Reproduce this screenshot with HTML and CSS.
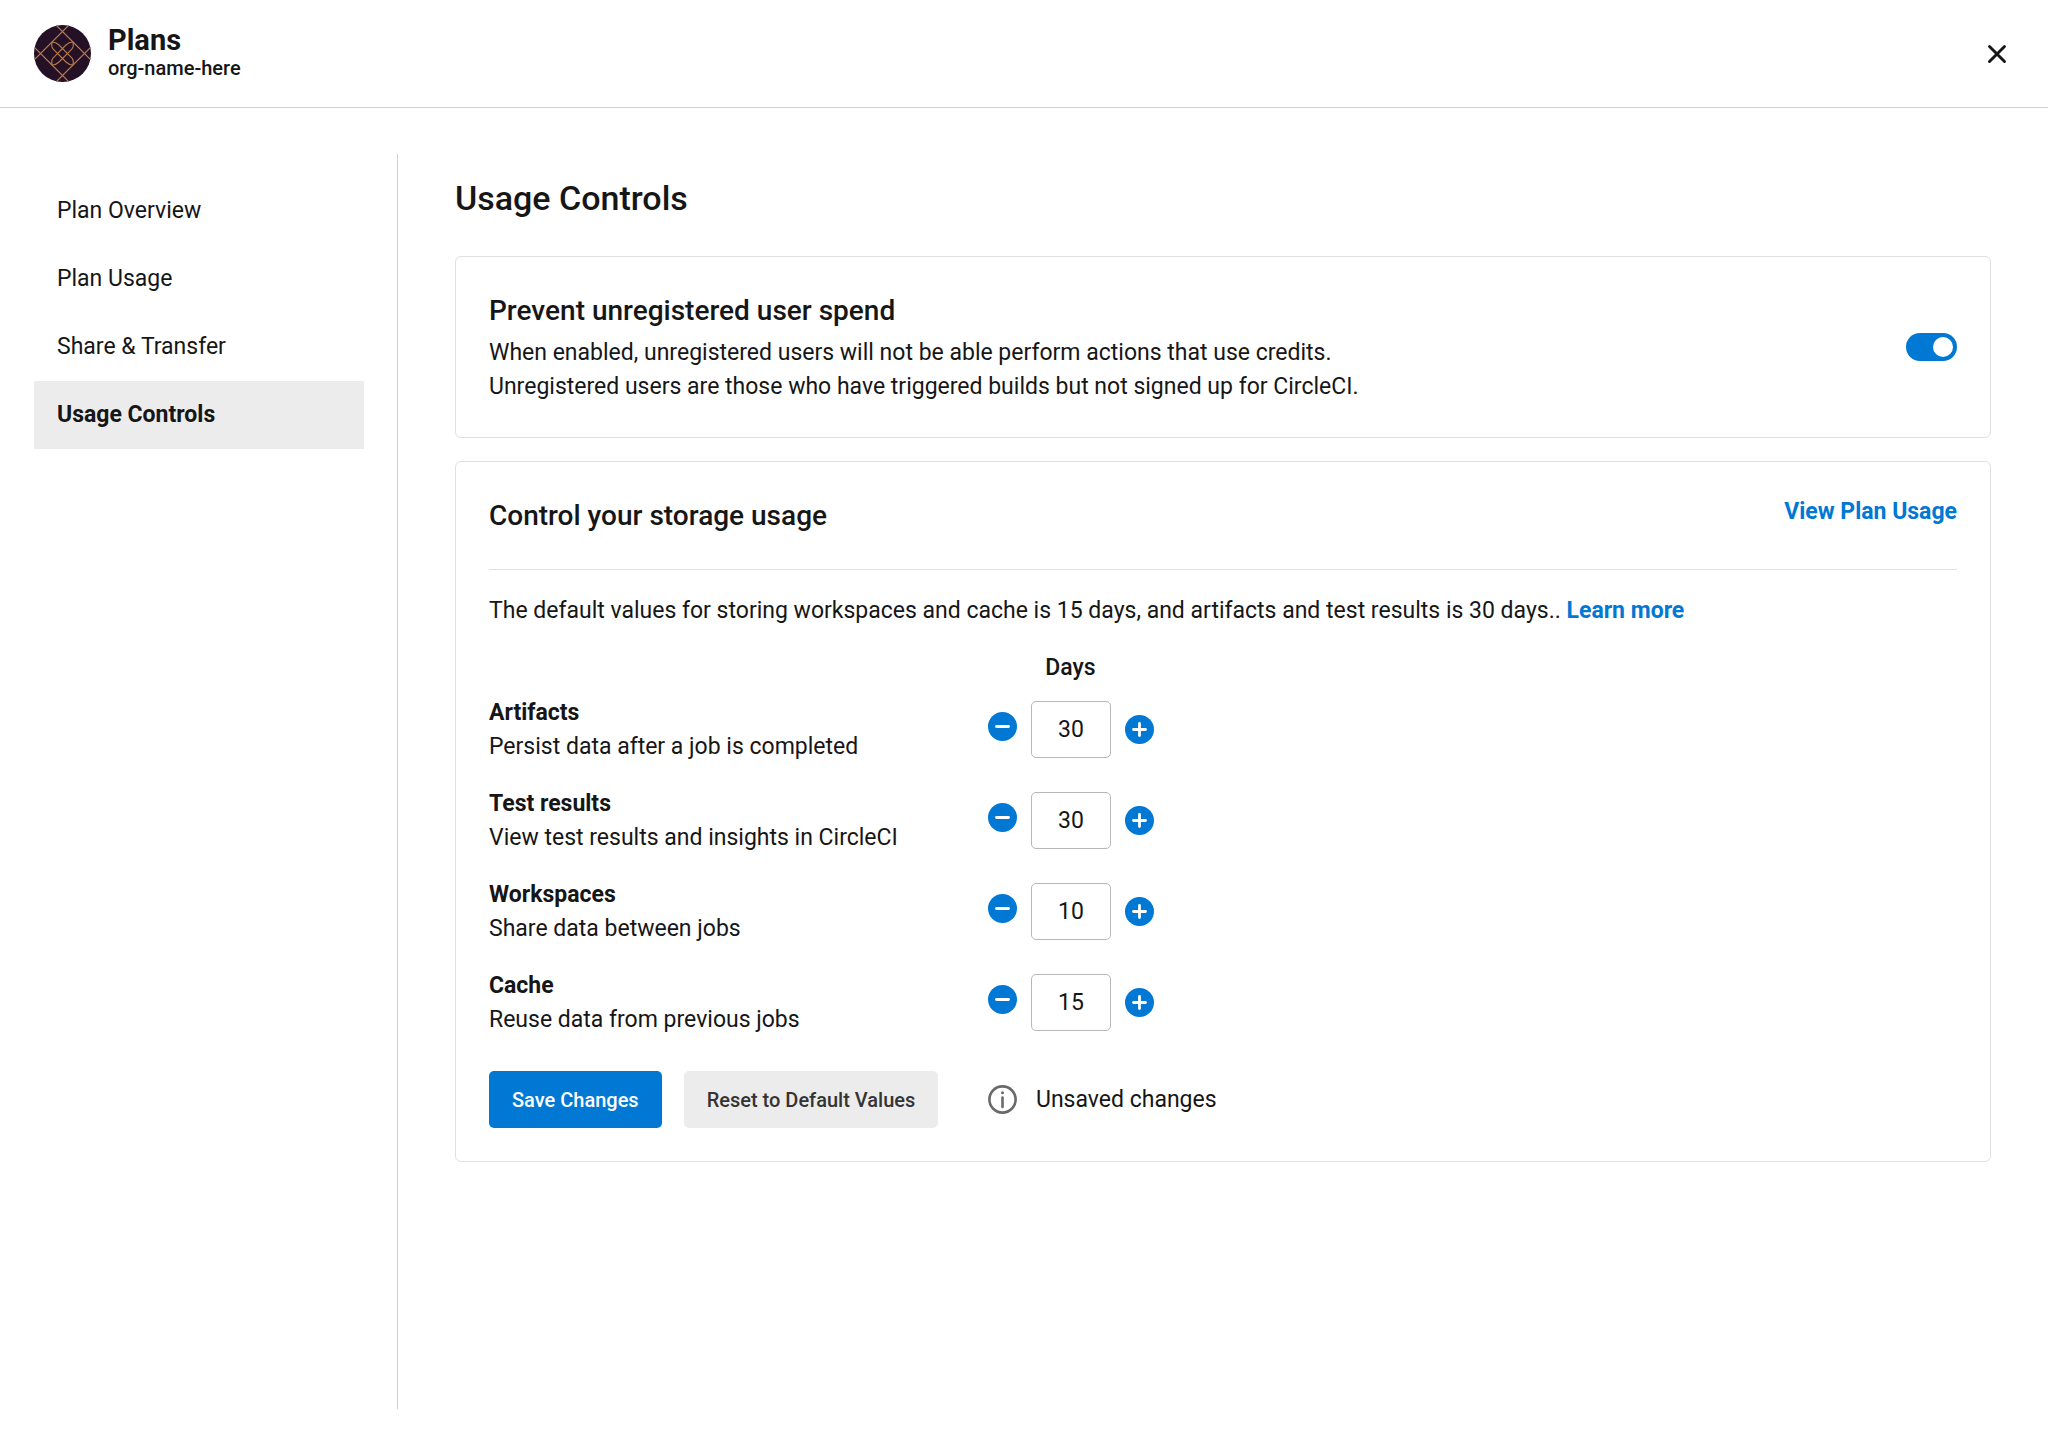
FILE: index.html
```html
<!DOCTYPE html>
<html lang="en">
<head>
<meta charset="utf-8">
<meta name="viewport" content="width=device-width, initial-scale=1">
<title>Plans</title>
<link rel="stylesheet" href="styles.css">
</head>
<body>
<svg class="sprite" aria-hidden="true">
  <symbol id="minus" viewBox="0 0 29 29">
    <circle cx="14.5" cy="14.5" r="14.5" fill="#0078d4"/>
    <path d="M8.5 14.5h12" stroke="#fff" stroke-width="2.8" stroke-linecap="round"/>
  </symbol>
  <symbol id="plus" viewBox="0 0 29 29">
    <circle cx="14.5" cy="14.5" r="14.5" fill="#0078d4"/>
    <path d="M8.5 14.5h12M14.5 8.5v12" stroke="#fff" stroke-width="2.8" stroke-linecap="round"/>
  </symbol>
</svg>

<header class="header">
  <svg class="avatar" viewBox="0 0 57 57" aria-hidden="true">
    <defs><clipPath id="disc"><circle cx="28.5" cy="28.5" r="28.5"/></clipPath></defs>
    <g clip-path="url(#disc)">
      <rect width="57" height="57" fill="#241126"/>
      <g fill="none" stroke="#b5794c" stroke-width="1.1">
        <path d="M22 0 39 17M35 0 18 17M22 57 39 40M35 57 18 40"/>
        <path d="M0 22 18 40M0 35 18 17M57 22 39 40M57 35 39 17"/>
        <path d="M18 17c3 0 5 1 7 3l13 13c1.500 2 1.500 5 1 7-3 0-5-1-7-3L19 24c-1.500-2-1.500-5-1-7z"/>
        <path d="M39 17c-3 0-5 1-7 3L19 33c-1.500 2-1.500 5-1 7 3 0 5-1 7-3l13-13c1.500-2 1.500-5 1-7z"/>
      </g>
    </g>
  </svg>
  <div class="heading">
    <h1 class="heading-title">Plans</h1>
    <p class="heading-org">org-name-here</p>
  </div>
  <button class="icon-button close" type="button" aria-label="Close">
    <svg width="20" height="20" viewBox="0 0 20 20" aria-hidden="true"><path d="M2.500 2.500l15 15M17.500 2.500l-15 15" stroke="#161616" stroke-width="2.900" stroke-linecap="round"/></svg>
  </button>
</header>

<div class="layout">
  <nav class="sidebar" aria-label="Plans">
    <a class="nav-link" href="#overview">Plan Overview</a>
    <a class="nav-link" href="#usage">Plan Usage</a>
    <a class="nav-link" href="#share">Share &amp; Transfer</a>
    <a class="nav-link active" href="#controls" aria-current="page">Usage Controls</a>
  </nav>

  <main class="content">
    <h2 class="page-title">Usage Controls</h2>

    <section class="card spend">
      <div>
        <h3 class="card-title"><label for="prevent">Prevent unregistered user spend</label></h3>
        <p class="spend-text">When enabled, unregistered users will not be able perform actions that use credits.<br>Unregistered users are those who have triggered builds but not signed up for CircleCI.</p>
      </div>
      <input class="toggle" id="prevent" type="checkbox" role="switch" checked>
    </section>

    <section class="card">
      <div class="card-head">
        <h3 class="card-title">Control your storage usage</h3>
        <a class="link" href="#usage">View Plan Usage</a>
      </div>
      <p class="intro">The default values for storing workspaces and cache is 15 days, and artifacts and test results is 30 days.. <a class="link" href="#learn">Learn more</a></p>

      <form class="retention">
        <div class="row">
          <span class="days">Days</span>
        </div>
        <div class="row">
          <label class="setting" for="artifacts"><b>Artifacts</b><span>Persist data after a job is completed</span></label>
          <div class="stepper">
            <button class="icon-button decrease" type="button" aria-label="Decrease artifacts days"><svg class="step-icon"><use href="#minus"/></svg></button>
            <input class="value" id="artifacts" type="text" inputmode="numeric" value="30">
            <button class="icon-button" type="button" aria-label="Increase artifacts days"><svg class="step-icon"><use href="#plus"/></svg></button>
          </div>
        </div>
        <div class="row">
          <label class="setting" for="results"><b>Test results</b><span>View test results and insights in CircleCI</span></label>
          <div class="stepper">
            <button class="icon-button decrease" type="button" aria-label="Decrease test results days"><svg class="step-icon"><use href="#minus"/></svg></button>
            <input class="value" id="results" type="text" inputmode="numeric" value="30">
            <button class="icon-button" type="button" aria-label="Increase test results days"><svg class="step-icon"><use href="#plus"/></svg></button>
          </div>
        </div>
        <div class="row">
          <label class="setting" for="workspaces"><b>Workspaces</b><span>Share data between jobs</span></label>
          <div class="stepper">
            <button class="icon-button decrease" type="button" aria-label="Decrease workspaces days"><svg class="step-icon"><use href="#minus"/></svg></button>
            <input class="value" id="workspaces" type="text" inputmode="numeric" value="10">
            <button class="icon-button" type="button" aria-label="Increase workspaces days"><svg class="step-icon"><use href="#plus"/></svg></button>
          </div>
        </div>
        <div class="row">
          <label class="setting" for="cache"><b>Cache</b><span>Reuse data from previous jobs</span></label>
          <div class="stepper">
            <button class="icon-button decrease" type="button" aria-label="Decrease cache days"><svg class="step-icon"><use href="#minus"/></svg></button>
            <input class="value" id="cache" type="text" inputmode="numeric" value="15">
            <button class="icon-button" type="button" aria-label="Increase cache days"><svg class="step-icon"><use href="#plus"/></svg></button>
          </div>
        </div>
        <div class="row actions">
          <div class="buttons">
            <button class="button primary" type="submit">Save Changes</button>
            <button class="button" type="reset">Reset to Default Values</button>
          </div>
          <p class="status">
            <svg width="29" height="29" viewBox="0 0 29 29" fill="none" aria-hidden="true">
              <circle cx="14.500" cy="14.500" r="13.100" stroke="#6a6a6a" stroke-width="2.600"/>
              <path d="M14.500 12.500v9.500" stroke="#6a6a6a" stroke-width="2.600" stroke-linecap="round"/>
              <circle cx="14.500" cy="7.800" r="1.500" fill="#6a6a6a"/>
            </svg>
            Unsaved changes
          </p>
        </div>
      </form>
    </section>
  </main>
</div>
</body>
</html>
```

FILE: styles.css
```css
* {
  box-sizing: border-box;
}

body {
  display: flex;
  flex-direction: column;
  min-height: 100vh;
  margin: 0;
  background: #fff;
  color: #161616;
  font: 400 23px/34px Roboto, "Liberation Sans", sans-serif;
}

h1,
h2,
h3,
p {
  margin: 0;
}

button,
input {
  font: inherit;
  color: inherit;
}

.sprite {
  display: none;
}

/* Header */

.header {
  display: flex;
  align-items: center;
  gap: 17px;
  padding: 24px 34px;
  border-bottom: 1px solid #d0d0d0;
}

.avatar {
  width: 57px;
  height: 57px;
}

.heading {
  padding-bottom: 3px;
}

.heading-title {
  font-size: 29px;
  font-weight: 700;
  line-height: 32px;
}

.heading-org {
  font-size: 20px;
  font-weight: 500;
  line-height: 24px;
}

.icon-button {
  display: flex;
  padding: 0;
  border: 0;
  background: none;
  cursor: pointer;
}

.close {
  margin-left: auto;
  padding: 7px;
}

/* Layout */

.layout {
  display: flex;
  flex: 1;
  padding: 46px 57px 47px 34px;
}

.sidebar {
  flex: none;
  width: 364px;
  padding: 23px 33px 0 0;
  border-right: 1px solid #d0d0d0;
}

.nav-link {
  display: block;
  padding: 17px 23px;
  color: inherit;
  line-height: 34px;
  text-decoration: none;
}

.nav-link.active {
  background: #ececec;
  font-weight: 700;
}

.content {
  flex: 1;
  min-width: 0;
  padding: 21px 0 0 57px;
}

.page-title {
  margin-bottom: 35px;
  font-size: 34px;
  font-weight: 500;
  line-height: 46px;
}

/* Cards */

.card {
  padding: 33px;
  border: 1px solid #e0e0e0;
  border-radius: 6px;
}

.card + .card {
  margin-top: 23px;
}

.card-title {
  font-size: 28px;
  font-weight: 500;
  line-height: 42px;
}

.spend {
  display: flex;
  align-items: center;
  justify-content: space-between;
  gap: 34px;
}

.spend-text {
  padding-top: 4px;
}

.toggle {
  flex: none;
  display: flex;
  align-items: center;
  justify-content: flex-end;
  width: 51px;
  height: 28px;
  margin: 0;
  padding: 4px;
  border-radius: 14px;
  background: #0078d4;
  appearance: none;
  cursor: pointer;
}

.toggle::before {
  content: "";
  width: 20px;
  height: 20px;
  border-radius: 50%;
  background: #fff;
}

.toggle:not(:checked) {
  justify-content: flex-start;
  background: #a0a0a0;
}

.card-head {
  display: flex;
  align-items: flex-start;
  justify-content: space-between;
  padding-bottom: 32px;
  border-bottom: 1px solid #e0e0e0;
}

.link {
  color: #0078d4;
  font-weight: 700;
  text-decoration: none;
}

.intro {
  padding: 24px 0 23px;
}

/* Retention form */

.row {
  display: grid;
  grid-template-columns: 499px 1fr;
  margin-bottom: 21px;
}

.row:first-child {
  margin-bottom: 9px;
}

.days {
  grid-column: 2;
  width: 165px;
  font-weight: 500;
  text-align: center;
}

.setting {
  display: flex;
  flex-direction: column;
  padding-top: 2px;
}

.setting b {
  font-weight: 700;
}

.stepper {
  display: flex;
  align-items: center;
  gap: 14px;
}

.step-icon {
  width: 29px;
  height: 29px;
}

.decrease {
  padding-bottom: 6px;
}

.value {
  width: 80px;
  height: 57px;
  padding: 0;
  border: 1px solid #b8b8b8;
  border-radius: 5px;
  background: #fff;
  text-align: center;
}

.actions {
  align-items: center;
  margin: 34px 0 0;
}

.buttons {
  display: flex;
  gap: 22px;
}

.button {
  padding: 12px 23px 11px;
  border: 0;
  border-radius: 5px;
  background: #ececec;
  color: #343434;
  font-size: 20px;
  font-weight: 500;
  cursor: pointer;
}

.button.primary {
  background: #0078d4;
  color: #fff;
}

.status {
  display: flex;
  align-items: center;
  gap: 19px;
}
```
